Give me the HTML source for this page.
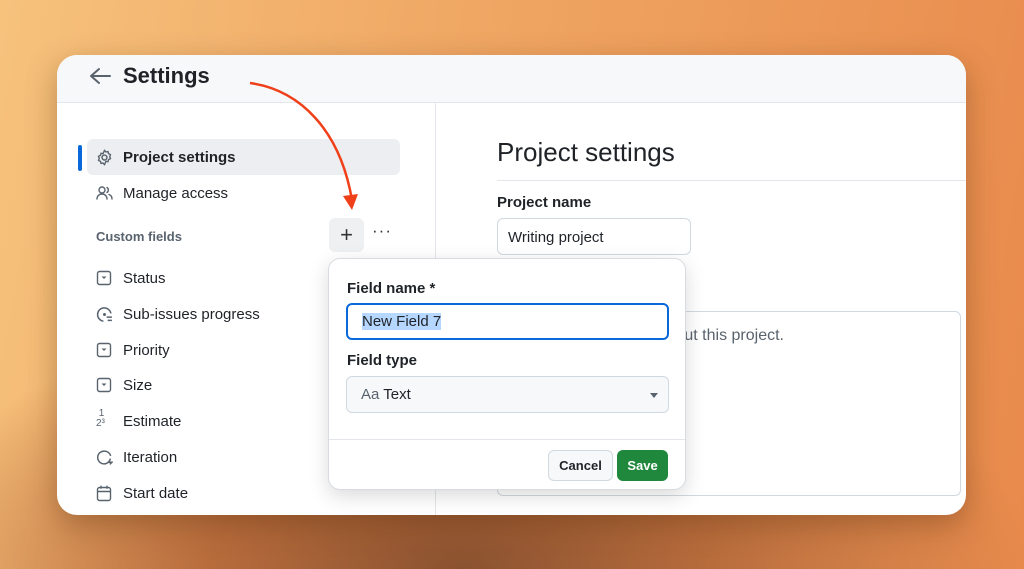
<!DOCTYPE html>
<html><head><meta charset="utf-8"><style>
*{box-sizing:border-box;margin:0;padding:0}
body{width:1024px;height:569px;overflow:hidden;font-family:"Liberation Sans",Helvetica,Arial,sans-serif;color:#1f2328;
background:radial-gradient(ellipse 70% 60% at 45% 100%,#8a5230 0%,#b86c3c 35%,rgba(230,140,80,0) 80%),linear-gradient(100deg,#f6c27c 0%,#f0a865 40%,#e88a4c 100%);position:relative}
.card{position:absolute;left:57px;top:55px;width:909px;height:460px;background:#fff;border-radius:20px;overflow:hidden;box-shadow:0 10px 30px rgba(80,40,10,.35)}
.hdr{height:48px;background:#f6f8fa;border-bottom:1px solid #e3e6ea;position:relative}
.hdr .t{position:absolute;left:66px;top:8px;font-size:22px;font-weight:bold}
.side{position:absolute;left:0;top:48px;width:379px;bottom:0;border-right:1px solid #e3e6ea}
.item{position:absolute;left:30px;height:36px;width:313px;border-radius:6px;font-size:15px;display:flex;align-items:center;padding-left:36px}
.item svg{position:absolute;left:9px;top:10px}
.sel{background:#eceef1}
.bar{position:absolute;left:21px;top:42px;width:4px;height:26px;background:#0969da;border-radius:2px}
.main{position:absolute;left:440px;top:48px;right:0;bottom:0}
.pop{position:absolute;left:328px;top:258px;width:358px;height:232px;background:#fff;border:1px solid #d8dce1;border-radius:12px;box-shadow:0 6px 20px rgba(0,0,0,.15)}
.lbl{position:absolute;font-size:15px;font-weight:bold}
</style></head><body>
<div class="card">
 <div class="hdr">
  <svg style="position:absolute;left:32px;top:12px" width="22" height="18" viewBox="0 0 22 18"><path d="M10 2L2 9l8 7M2 9h19" fill="none" stroke="#59636e" stroke-width="2" stroke-linecap="round" stroke-linejoin="round"/></svg>
  <div class="t">Settings</div>
 </div>
 <div class="side">
  <div class="bar"></div>
  <div class="item sel" style="top:36px;font-weight:bold"><svg width="17" height="17" viewBox="0 0 16 16"><circle cx="8" cy="8" r="2.3" fill="none" stroke="#59636e" stroke-width="1.4"/><path d="M8 1.2l1.3 1.6 2-.4.5 2 1.9.9-.8 1.9.8 1.9-1.9.9-.5 2-2-.4L8 14.8 6.7 13.2l-2 .4-.5-2-1.9-.9.8-1.9-.8-1.9 1.9-.9.5-2 2 .4z" fill="none" stroke="#59636e" stroke-width="1.3" stroke-linejoin="round"/></svg>Project settings</div>
  <div class="item" style="top:72px"><svg width="18" height="16" viewBox="0 0 18 16"><circle cx="6" cy="5" r="3" fill="none" stroke="#59636e" stroke-width="1.4"/><path d="M1 14c0-3 2.2-5 5-5s5 2 5 5M11 2.5a3 3 0 010 5M13 9.5c2 .7 3 2.3 3 4.5" fill="none" stroke="#59636e" stroke-width="1.4" stroke-linecap="round"/></svg>Manage access</div>
  <div style="position:absolute;left:39px;top:126px;font-size:13px;color:#59636e;font-weight:bold">Custom fields</div>
  <div style="position:absolute;left:272px;top:115px;width:35px;height:34px;background:#eef0f2;border-radius:6px;font-size:22px;color:#333;text-align:center;line-height:33px">+</div>
  <div style="position:absolute;left:315px;top:118px;font-size:17px;color:#333;letter-spacing:1px">···</div>
  <div class="item" style="top:157px"><svg width="16" height="16" viewBox="0 0 16 16"><rect x="1.5" y="1.5" width="13" height="13" rx="2" fill="none" stroke="#59636e" stroke-width="1.4"/><path d="M5.5 6.5h5L8 9z" fill="#59636e"/></svg>Status</div>
  <div class="item" style="top:193px"><svg width="17" height="17" viewBox="0 0 16 16"><path d="M14 7A6.3 6.3 0 107 14.3" fill="none" stroke="#59636e" stroke-width="1.4"/><circle cx="8" cy="8" r="1.4" fill="#59636e"/><path d="M10 10.5h5M11 13.5h4" stroke="#59636e" stroke-width="1.4"/></svg>Sub-issues progress</div>
  <div class="item" style="top:229px"><svg width="16" height="16" viewBox="0 0 16 16"><rect x="1.5" y="1.5" width="13" height="13" rx="2" fill="none" stroke="#59636e" stroke-width="1.4"/><path d="M5.5 6.5h5L8 9z" fill="#59636e"/></svg>Priority</div>
  <div class="item" style="top:264px"><svg width="16" height="16" viewBox="0 0 16 16"><rect x="1.5" y="1.5" width="13" height="13" rx="2" fill="none" stroke="#59636e" stroke-width="1.4"/><path d="M5.5 6.5h5L8 9z" fill="#59636e"/></svg>Size</div>
  <div class="item" style="top:300px"><span style="position:absolute;left:9px;top:6px;font-size:10px;color:#59636e;line-height:10px">&nbsp;1<br>2³</span>Estimate</div>
  <div class="item" style="top:336px"><svg width="17" height="17" viewBox="0 0 16 16"><path d="M13.5 9A6 6 0 118 2a6 6 0 015.8 4.5" fill="none" stroke="#59636e" stroke-width="1.4"/><path d="M11 12.5h4l-2 2" fill="none" stroke="#59636e" stroke-width="1.4"/></svg>Iteration</div>
  <div class="item" style="top:372px"><svg width="16" height="17" viewBox="0 0 16 17"><rect x="1.5" y="2.5" width="13" height="13" rx="2" fill="none" stroke="#59636e" stroke-width="1.4"/><path d="M1.5 6.5h13M5 .8v3M11 .8v3" stroke="#59636e" stroke-width="1.4"/></svg>Start date</div>
 </div>
 <div class="main">
  <div style="position:absolute;left:0;top:34px;font-size:26px">Project settings</div>
  <div style="position:absolute;left:0;right:0;top:77px;border-top:1px solid #e3e6ea"></div>
  <div class="lbl" style="left:0;top:91px">Project name</div>
  <div style="position:absolute;left:0;top:115px;width:194px;height:37px;border:1px solid #d1d9e0;border-radius:6px;font-size:15px;padding:10px 0 0 10px">Writing project</div>
  <div style="position:absolute;left:0;top:208px;width:464px;height:185px;border:1px solid #d1d9e0;border-radius:6px"></div>
  <div style="position:absolute;left:10px;top:224px;width:277px;font-size:16px;color:#59636e;text-align:right;white-space:nowrap;overflow:hidden;direction:rtl"><span dir="ltr" style="unicode-bidi:isolate">Tell people what to know about this project.</span></div>
 </div>
</div>
<div class="pop">
 <div class="lbl" style="left:18px;top:21px">Field name *</div>
 <div style="position:absolute;left:17px;top:44px;width:323px;height:37px;border:2px solid #0969da;border-radius:6px;font-size:15px;padding:8px 0 0 14px"><span style="background:#b6d7ff">New Field 7</span></div>
 <div class="lbl" style="left:18px;top:93px">Field type</div>
 <div style="position:absolute;left:17px;top:117px;width:323px;height:37px;border:1px solid #d1d9e0;background:#f6f8fa;border-radius:6px;font-size:15px;padding:9px 0 0 14px"><span style="color:#59636e">Aa</span> Text<span style="position:absolute;right:10px;top:16px;border:4px solid transparent;border-top:5px solid #59636e"></span></div>
 <div style="position:absolute;left:0;right:0;top:180px;border-top:1px solid #e3e6ea"></div>
 <div style="position:absolute;left:219px;top:191px;width:65px;height:31px;border:1px solid #d1d9e0;background:#f6f8fa;border-radius:6px;font-size:13px;font-weight:bold;text-align:center;line-height:29px">Cancel</div>
 <div style="position:absolute;left:288px;top:191px;width:51px;height:31px;background:#1f883d;color:#fff;border-radius:6px;font-size:13px;font-weight:bold;text-align:center;line-height:31px">Save</div>
</div>
<svg style="position:absolute;left:0;top:0" width="1024" height="569"><path d="M250 83C300 90 340 130 352 200" fill="none" stroke="#f0401a" stroke-width="2.5"/><path d="M343 196l9 14 6-16z" fill="#f0401a"/></svg>
</body></html>
